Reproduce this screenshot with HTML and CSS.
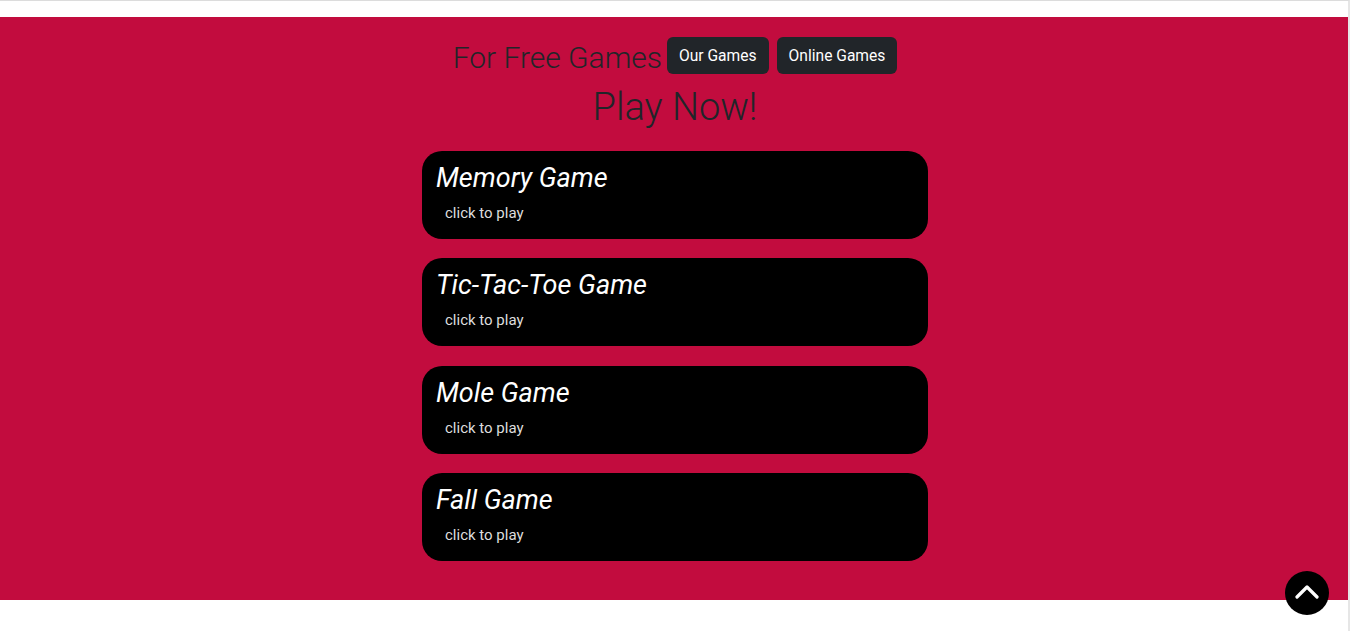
FILE: index.html
```html
<!DOCTYPE html>
<html lang="en">
<head>
<meta charset="utf-8">
<title>Games</title>
<link rel="stylesheet" href="styles.css">
</head>
<body>
<div class="topbar"></div>
<main class="games">
  <div class="intro">
    <h2 class="intro-title">For Free Games</h2>
    <a class="btn">Our Games</a>
    <a class="btn">Online Games</a>
  </div>
  <h1 class="play">Play Now!</h1>
  <div class="list">
    <a class="card"><h3 class="card-title">Memory Game</h3><p class="card-sub">click to play</p></a>
    <a class="card"><h3 class="card-title">Tic-Tac-Toe Game</h3><p class="card-sub">click to play</p></a>
    <a class="card"><h3 class="card-title">Mole Game</h3><p class="card-sub">click to play</p></a>
    <a class="card"><h3 class="card-title">Fall Game</h3><p class="card-sub">click to play</p></a>
  </div>
</main>
<a class="to-top" aria-label="Back to top">
  <svg width="24" height="14" viewBox="0 0 24 14"><path d="M2 12 L12 2 L22 12" fill="none" stroke="#fff" stroke-width="3.2" stroke-linecap="round" stroke-linejoin="round"/></svg>
</a>
</body>
</html>
```
FILE: styles.css
```css
html, body {
  margin: 0;
  padding: 0;
  background: #fff;
}
body {
  font-family: Roboto, "Noto Sans", sans-serif;
  color: #212529;
  border-top: 1px solid #dcdcdc;
  border-right: 2px solid #e6e6e6;
  min-height: 631px;
  box-sizing: border-box;
}
.topbar {
  height: 16px;
}
.games {
  background: #c20c3e;
  padding: 18px 0 39px 2px;
  display: flex;
  flex-direction: column;
  align-items: center;
}
.intro {
  display: flex;
  align-items: center;
  gap: 8px;
}
.intro-title {
  margin: 0;
  font-weight: 300;
  font-size: 30px;
  line-height: 1.2;
  padding-top: 5px;
  margin-right: -3px;
}
.btn {
  background: #212529;
  color: #fff;
  font-size: 15.6px;
  line-height: 25px;
  padding: 7px 12px 5px;
  border-radius: 6px;
  display: inline-block;
}
.play {
  margin: 9px 0 20px;
  font-weight: 300;
  font-size: 38px;
  line-height: 1.2;
}
.list {
  display: flex;
  flex-direction: column;
  gap: 19.5px;
  width: 506px;
}
.card {
  display: block;
  background: #000;
  border-radius: 20px;
  height: 88px;
  flex-shrink: 0;
  box-sizing: border-box;
  padding: 9px 14px;
}
.card-title {
  margin: 0;
  color: #fff;
  font-style: italic;
  font-weight: 400;
  font-size: 27px;
  line-height: 36px;
}
.card-sub {
  margin: 4px 0 0 9px;
  color: #ddd;
  font-size: 15px;
  line-height: 26px;
}
.to-top {
  position: fixed;
  right: 21px;
  bottom: 17px;
  width: 44px;
  height: 44px;
  border-radius: 50%;
  background: #000;
  display: flex;
  align-items: center;
  justify-content: center;
}
.to-top svg {
  margin-top: -3px;
}
```
